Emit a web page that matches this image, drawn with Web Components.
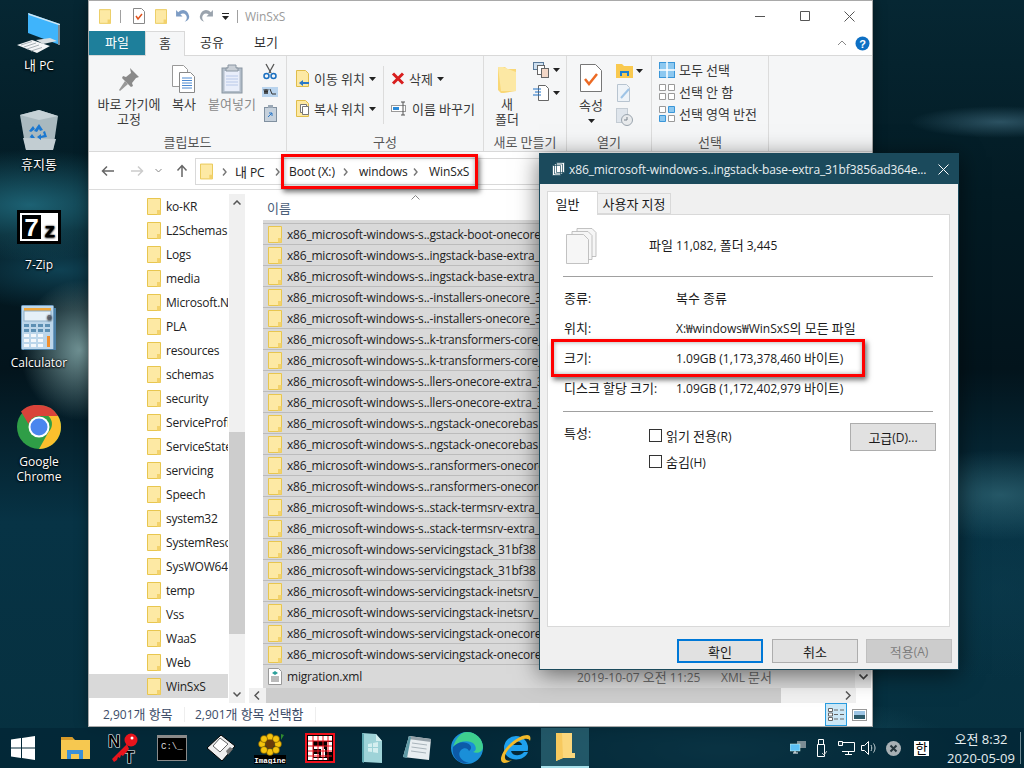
<!DOCTYPE html>
<html lang="ko">
<head>
<meta charset="utf-8">
<title>WinSxS</title>
<style>
  html, body { margin: 0; padding: 0; height: 100%; overflow: hidden; }
  body { font: 12px "Open Sans", "Noto Sans CJK KR", sans-serif; color: #1a1a1a; }
</style>
</head>
<body>
<desk-top>
  <desk-icon slot="icons" label="내 PC" icon="pc"></desk-icon>
  <desk-icon slot="icons" label="휴지통" icon="bin"></desk-icon>
  <desk-icon slot="icons" label="7-Zip" icon="zip"></desk-icon>
  <desk-icon slot="icons" label="Calculator" icon="calc"></desk-icon>
  <desk-icon slot="icons" label="Google Chrome" icon="chrome"></desk-icon>
  <file-explorer slot="windows"></file-explorer>
  <props-dialog slot="windows"></props-dialog>
  <red-mark slot="windows" style="left:281px;top:154px;width:191px;height:29px"></red-mark>
  <red-mark slot="windows" style="left:551px;top:339px;width:308px;height:32px"></red-mark>
  <task-bar slot="bar"></task-bar>
</desk-top>

<script>
// Noto's hangul is narrower than the one in the screenshot, 13px gives the same advance
const kr = (html) => html.replace(/[가-힣]+/g, (m) => `<span style="font-size:13px">${m}</span>`);

// icons shared by the components
const folder = (w = 14, h = 17) => `<svg width="${w}" height="${h}" viewBox="0 0 14 17"><path d="M.5.5h13v16H.5z" fill="#fde9a4" stroke="#e8c64f"/><path d="M10 12h3.500v4.500H10z" fill="#f3d26c"/></svg>`;
const chev = `<svg width="5" height="8" viewBox="0 0 5 8"><path d="M1 .5L4 4 1 7.500" fill="none" stroke="#777" stroke-width="1.400"/></svg>`;

const ICONS = {
  pc: `<svg width="46" height="42" viewBox="0 0 46 42"><path d="M12 1l32 11v21L12 21z" fill="#3fb4fb"/><path d="M12 1l32 11v21l-1.500-.5V13L13 3z" fill="#cfe6f2"/><path d="M43 13v20" stroke="#7d8a92" stroke-width="2"/><path d="M20 28l14-2 7 3-14 3z" fill="#d7dde0"/><path d="M1 33l15-5 18 6-13 7z" fill="#f4f6f7"/><path d="M5 33l11-3.500M8 35l12-4M11 37l12-4M15 39l11-3.500" stroke="#a9b2b8"/></svg>`,
  bin: `<svg width="40" height="42" viewBox="0 0 40 42"><path d="M1 6L20 1l19 6-5 34H7z" fill="#a9b9bf"/><path d="M1 6L20 1l19 6-19 4z" fill="#c5d1d6"/><path d="M4 29l33 1-3 11H7z" fill="#c2cdd2"/><path d="M20 15l4 6-3 1-1-2-2 3-3-1zM26 22l2 6-6 1v2l-4-3 4-3v2l3-1-1-3zM13 25l3 4h-4l-1-1-1 1zM14 17l2 3-4 3-2-1z" fill="#1c78d0"/></svg>`,
  zip: `<svg width="44" height="34" viewBox="0 0 44 34"><rect width="44" height="34" fill="#000"/><rect x="3" y="3" width="38" height="28" fill="#fff"/><rect x="5" y="5" width="19" height="24" fill="#000"/><text x="14.500" y="26" font-family="Liberation Mono" font-weight="700" font-size="26" fill="#fff" text-anchor="middle">7</text><text x="33" y="27" font-family="Liberation Mono" font-weight="700" font-size="20" fill="#000" text-anchor="middle">z</text></svg>`,
  calc: `<svg width="36" height="46" viewBox="0 0 36 46"><rect x=".5" y=".5" width="32" height="44" rx="1" fill="#bcd6ea" stroke="#6f9cc0"/><rect x="3" y="3" width="27" height="3" fill="#f0a63a"/><rect x="3" y="6" width="27" height="10" fill="#e6f0f8" stroke="#8fb0c8"/><text x="26" y="15" font-family="Liberation Mono" font-size="8" fill="#556">0</text><g fill="#5c8fb3"><path d="M3 19h5v3H3zM10 19h5v3h-5zM17 19h5v3h-5zM24 19h5v3h-5zM3 24h5v3H3zM10 24h5v3h-5zM17 24h5v3h-5zM24 24h5v3h-5z"/></g><g fill="#f4f8fb"><path d="M3 29h5v3H3zM10 29h5v3h-5zM17 29h5v3h-5zM3 34h5v3H3zM10 34h5v3h-5zM17 34h5v3h-5zM3 39h5v3H3zM10 39h5v3h-5zM17 39h5v3h-5z"/></g><rect x="26" y="31" width="3" height="11" fill="#f08f2e"/><path d="M33 3h2v42H3v-1h30z" fill="#4b7fa6"/></svg>`,
  chrome: `<svg width="44" height="44" viewBox="0 0 44 44"><circle cx="22" cy="22" r="22" fill="#2f9e47"/><path d="M22 0a22 22 0 0 1 19 11H22a11 11 0 0 0-10.500 8L4 6.500A22 22 0 0 1 22 0z" fill="#d9433a"/><path d="M41 11a22 22 0 0 1-19 33l9.500-17a11 11 0 0 0 0-16z" fill="#fbc02d"/><circle cx="22" cy="22" r="10.500" fill="#fff"/><circle cx="22" cy="22" r="8.500" fill="#4a86ee"/></svg>`
};

class DeskTop extends HTMLElement {
  constructor() {
    super();
    this.attachShadow({mode: "open"});
    this.shadowRoot.innerHTML = `
    <style>
      :host {
        display: flex; flex-direction: column; position: relative;
        width: 1024px; height: 768px; overflow: hidden;
        background:
          radial-gradient(ellipse 60px 70px at 80px 350px, rgba(150,190,190,.75), transparent),
          radial-gradient(ellipse 150px 55px at 30px 205px, rgba(35,115,135,.8), transparent),
          radial-gradient(ellipse 120px 40px at 60px 270px, rgba(18,75,95,.8), transparent),
          radial-gradient(ellipse 90px 16px at 1000px 122px, rgba(70,115,135,.6), transparent),
          radial-gradient(ellipse 120px 45px at 1000px 495px, rgba(50,105,120,.7), transparent),
          radial-gradient(ellipse 130px 90px at 1000px 590px, rgba(12,60,78,.5), transparent),
          radial-gradient(ellipse 240px 60px at 720px 750px, rgba(45,115,135,.55), transparent),
          linear-gradient(#062733 0, #031b24 25%, #03141c 48%, #073345 68%, #06303f 100%);
      }
      .icons { flex: 1; display: flex; flex-direction: column; width: 78px; }
    </style>
    <div class="icons"><slot name="icons"></slot></div>
    <slot name="windows"></slot>
    <slot name="bar"></slot>`;
  }
}

class DeskIcon extends HTMLElement {
  constructor() {
    super();
    this.attachShadow({mode: "open"});
    const name = this.getAttribute("icon");
    const tops = {pc: 12, bin: 10, zip: 12, calc: 8, chrome: 9};
    this.shadowRoot.innerHTML = kr(`
    <style>
      :host { display: flex; flex-direction: column; align-items: center; height: 99px; width: 78px;
        color: #fff; text-align: center; line-height: 15px; text-shadow: 0 1px 2px #000, 0 0 2px #000; }
      .i { height: 46px; margin-top: ${tops[name]}px; display: flex; align-items: flex-start; }
      .l { margin-top: ${{pc: 0, bin: 2, zip: 1, calc: 4, chrome: 3}[name]}px; width: 66px; }
    </style>
    <div class="i">${ICONS[name]}</div>
    <div class="l">${this.getAttribute("label")}</div>`);
  }
}

class RedMark extends HTMLElement {
  constructor() {
    super();
    this.attachShadow({mode: "open"});
    this.shadowRoot.innerHTML = `<style>
      :host { display: block; position: absolute; border: 3px solid #f00; box-shadow: 2px 3px 5px rgba(0,0,0,.55), inset 0 0 5px rgba(0,0,0,.35); }
    </style>`;
  }
}

class FileExplorer extends HTMLElement {
  constructor() {
    super();
    this.attachShadow({mode: "open"});
    const nav = ["ko-KR","L2Schemas","Logs","media","Microsoft.NET","PLA","resources","schemas","security","ServiceProfiles","ServiceState","servicing","Speech","system32","SystemResources","SysWOW64","temp","Vss","WaaS","Web","WinSxS"];
    const pre = "x86_microsoft-windows-s..";
    const rows = ["gstack-boot-onecore","ingstack-base-extra_","ingstack-base-extra_","-installers-onecore_3","-installers-onecore_3","k-transformers-core_","k-transformers-core_","llers-onecore-extra_3","llers-onecore-extra_3","ngstack-onecorebas","ngstack-onecorebas","ransformers-onecore","ransformers-onecore","stack-termsrv-extra_","stack-termsrv-extra_"].map(s => pre + s);
    const ser = "x86_microsoft-windows-servicingstack";
    rows.push(ser + "_31bf38", ser + "_31bf38", ser + "-inetsrv_", ser + "-inetsrv_", ser + "-onecore", ser + "-onecore");
    this.shadowRoot.innerHTML = kr(`
    <style>
      :host { display: flex; flex-direction: column; position: absolute; left: 88px; top: 0; width: 783px; height: 725px;
        background: #fff; border: 1px solid #a9a9a9; box-shadow: 0 0 12px rgba(0,0,0,.4); }
      .title { height: 30px; display: flex; align-items: center; position: relative; flex: none; padding-left: 10px; gap: 0; }
      .title svg { flex: none; }
      .title .name { color: #9a9a9a; margin-left: 7px; letter-spacing: -.1px; }
      .bar { width: 1px; height: 13px; background: #a0a0a0; }
      .wc { margin-left: auto; display: flex; }
      .wc span { width: 45px; height: 30px; display: flex; align-items: center; justify-content: center; }
      .addr { height: 37px; flex: none; display: flex; align-items: center; border-bottom: 1px solid #dcdcdc; box-sizing: content-box; color: #222; }
      .nb { display: flex; align-items: center; width: 106px; flex: none; padding-left: 12px; box-sizing: border-box; gap: 0; }
      .box { height: 27px; width: 500px; flex: none; border: 1px solid #d9d9d9; display: flex; align-items: center; padding-left: 4px; box-sizing: border-box; margin-top: 2px; }
      .box b { font-weight: 400; letter-spacing: -.1px; white-space: nowrap; }
      .box .chev { display: flex; justify-content: center; flex: none; }
      .main { flex: 1; display: flex; min-height: 0; }
      .nav { width: 140px; flex: none; overflow: hidden; padding-top: 4px; box-sizing: border-box; }
      .nav div { height: 24px; display: flex; align-items: center; padding-left: 58px; gap: 5px; white-space: nowrap; color: #222; width: 139px; box-sizing: border-box; overflow: hidden; letter-spacing: -.2px; }
      .nav div svg { flex: none; }
      .nav div.sel { background: #d9d9d9; }
      .sb { width: 16px; flex: none; background: #f0f0f0; position: relative; display: flex; flex-direction: column; margin-top: 4px; }
      .thumb { position: absolute; left: 0; right: 0; top: 238px; height: 202px; background: #cdcdcd; }
      .sb svg { position: absolute; left: 4px; }
      .pane { margin-left: 4px; flex: 1; display: flex; flex-direction: column; min-width: 0; }
      .head { height: 30px; flex: none; color: #4c607a; padding-left: 18px; display: flex; align-items: center; position: relative; padding-top: 4px; box-sizing: border-box; }
      .list { flex: 1; margin-left: 14px; margin-right: 16px; background: #d9d9d9; overflow: hidden; min-height: 0; }
      .row { height: 21px; display: flex; align-items: center; gap: 5px; padding-left: 5px; border-bottom: 1px solid #bcbcbc; box-sizing: border-box; white-space: nowrap; color: #222; letter-spacing: -.2px; }
      .row svg { flex: none; }
      .row:last-child { border: 0; height: 22px; }
      .part { height: 4px; overflow: hidden; border-bottom: 1px solid #bcbcbc; box-sizing: border-box; }
      .date { position: absolute; left: 314px; color: #6d6d6d; letter-spacing: 0; }
      .xml { position: absolute; left: 458px; color: #6d6d6d; letter-spacing: 0; }
      .hs { height: 15px; flex: none; background: #f0f0f0; margin-right: 16px; position: relative; }
      .hs i { position: absolute; left: 17px; width: 515px; top: 0; bottom: 0; background: #cdcdcd; }
      .vs { position: absolute; left: 606px; bottom: 15px; width: 16px; height: 22px; background: #e6e6e6; display: flex; align-items: center; justify-content: center; }
      .status { height: 23px; flex: none; display: flex; align-items: center; padding-left: 14px; color: #3c4c68; position: relative; }
      .status > div { height: 15px; line-height: 15px; white-space: nowrap; }
      .status .a { width: 81px; border-right: 1px solid #eee; margin-right: 10px; }
      .status .b { width: 120px; border-right: 1px solid #eee; }
      .status .views { margin-left: auto; display: flex; align-items: center; padding-right: 2px; gap: 1px; height: 23px; }
      .views span { height: 23px; width: 22px; display: flex; align-items: center; justify-content: center; box-sizing: border-box; }
      .views .on { background: #cce8f7; border: 1px solid #2a9de0; }
      .rel { position: relative; }
    </style>
    <div class="title">
      ${folder(12, 15)}
      <span class="bar" style="margin-left:9px"></span>
      <svg style="margin-left:12px" width="12" height="16" viewBox="0 0 12 16"><path d="M.5.5h8l3 3v12H.5z" fill="#fff" stroke="#888"/><path d="M3 8l2 3 4-5" fill="none" stroke="#e0521c" stroke-width="1.500"/></svg>
      <span style="margin-left:10px;display:flex">${folder(12, 15)}</span>
      <svg style="margin-left:8px" width="15" height="15" viewBox="0 0 14 14"><path d="M1 1v6h6L5 5c3-2 6 0 6 3 0 2-1 3-2 4 3-1 5-3 4-6C12 1 7-1 3 3z" fill="#7d9cc4"/></svg>
      <svg style="margin-left:9px" width="15" height="15" viewBox="0 0 14 14"><path d="M13 1v6H7l2-2C6 3 3 5 3 8c0 2 1 3 2 4C2 11 0 9 1 6c1-5 6-7 10-3z" fill="#9aa3ad"/></svg>
      <svg style="margin-left:8px" width="7" height="9" viewBox="0 0 7 9"><path d="M0 1h7v1H0zM0 4h7L3.500 8z" fill="#222"/></svg>
      <span class="bar" style="margin-left:8px"></span>
      <span class="name">WinSxS</span>
      <span class="wc">
        <span><svg width="10" height="10"><path d="M0 5.500h10" stroke="#555"/></svg></span>
        <span><svg width="10" height="10"><path d="M.5.500h9v9h-9z" fill="none" stroke="#555"/></svg></span>
        <span><svg width="11" height="11"><path d="M.5.500l10 10M10.500.500l-10 10" stroke="#555"/></svg></span>
      </span>
    </div>
    <ex-ribbon></ex-ribbon>
    <div class="addr">
      <div class="nb">
        <svg width="14" height="12" viewBox="0 0 14 12"><path d="M13 6H2M6 1.500L1.500 6 6 10.500" fill="none" stroke="#666" stroke-width="1.500"/></svg>
        <svg style="margin-left:15px" width="14" height="12" viewBox="0 0 14 12"><path d="M1 6h11M8 1.500L12.500 6 8 10.500" fill="none" stroke="#ccc" stroke-width="1.500"/></svg>
        <svg style="margin-left:11px" width="7" height="5" viewBox="0 0 7 5"><path d="M.5 1l3 3 3-3" fill="none" stroke="#888"/></svg>
        <svg style="margin-left:14px" width="12" height="14" viewBox="0 0 12 14"><path d="M6 13V2M1.500 6.500L6 1.500l4.500 5" fill="none" stroke="#666" stroke-width="1.500"/></svg>
      </div>
      <div class="box">
        ${folder(13, 17)}
        <span class="chev" style="width:22px">${chev}</span><b style="width:36px">내 PC</b>
        <span class="chev" style="width:12px">${chev}</span><b style="width:50px;margin-left:6px">Boot (X:)</b>
        <span class="chev" style="width:12px">${chev}</span><b style="width:50px;margin-left:8px">windows</b>
        <span class="chev" style="width:12px">${chev}</span><b style="margin-left:8px">WinSxS</b>
      </div>
    </div>
    <div class="main">
      <div class="nav">${nav.map(n => `<div class="${n === "WinSxS" ? "sel" : ""}">${folder(14, 17)}<span>${n}</span></div>`).join("")}</div>
      <div class="sb">
        <span class="thumb"></span>
        <svg style="top:6px" width="8" height="5" viewBox="0 0 8 5"><path d="M.5 4.500L4 1l3.500 3.500" fill="none" stroke="#555" stroke-width="1.500"/></svg>
        <svg style="top:498px" width="8" height="5" viewBox="0 0 8 5"><path d="M.5.500L4 4 7.500.500" fill="none" stroke="#555" stroke-width="1.500"/></svg>
      </div>
      <div class="pane rel">
        <div class="head"><span>이름</span>
          <svg style="position:absolute;left:162px;top:5px" width="9" height="5" viewBox="0 0 9 5"><path d="M.5 4.500l4-4 4 4" fill="none" stroke="#888"/></svg>
        </div>
        <div class="list">
          <div class="part"></div>
          ${rows.map(r => `<div class="row">${folder(14, 17)}<span>${r}</span></div>`).join("")}
          <div class="row rel">
            <svg width="14" height="17" viewBox="0 0 14 17"><path d="M.5.500h10l3 3v13H.5z" fill="#fff" stroke="#999"/><path d="M4 5l3-2 3 2-3 2z" fill="#2ba09a"/><path d="M3 9h8M3 11h8M3 13h8" stroke="#777"/></svg>
            <span>migration.xml</span>
            <span class="date">2019-10-07 오전 11:25</span><span class="xml">XML 문서</span>
          </div>
        </div>
        <div class="vs"><svg width="9" height="6" viewBox="0 0 9 6"><path d="M.5.500L4.500 4.500 8.500.500" fill="none" stroke="#444" stroke-width="1.600"/></svg></div>
        <div class="hs"><i></i>
          <svg style="position:absolute;left:5px;top:3px" width="6" height="9" viewBox="0 0 6 9"><path d="M5 .5l-4 4 4 4" fill="none" stroke="#555" stroke-width="1.500"/></svg>
          <svg style="position:absolute;left:596px;top:3px" width="6" height="9" viewBox="0 0 6 9"><path d="M1 .5l4 4-4 4" fill="none" stroke="#555" stroke-width="1.500"/></svg>
        </div>
      </div>
    </div>
    <div class="status">
      <div class="a">2,901개 항목</div><div class="b">2,901개 항목 선택함</div>
      <div class="views">
        <span class="on"><svg width="16" height="13" viewBox="0 0 16 13"><path d="M.5.500h4v3h-4zM.5 5h4v3h-4zM.5 9.500h4v3h-4z" fill="#fff" stroke="#666"/><path d="M6 2h4M12 2h4M6 6.500h4M12 6.500h4M6 11h4M12 11h4" stroke="#666"/></svg></span>
        <span><svg width="15" height="12" viewBox="0 0 15 12"><rect x=".5" y=".5" width="14" height="11" fill="#fff" stroke="#999"/><rect x="2" y="2" width="11" height="4" fill="#9cc4e4"/><rect x="2" y="6" width="11" height="4" fill="#2c5a6a"/></svg></span>
      </div>
    </div>`);
  }
}

class ExRibbon extends HTMLElement {
  constructor() {
    super();
    this.attachShadow({mode: "open"});
    const tri = `<svg class="tri" width="7" height="4" viewBox="0 0 7 4"><path d="M0 0h7L3.500 4z" fill="#222"/></svg>`;
    const moveI = (kind) => `<svg width="14" height="17" viewBox="0 0 14 17"><path d="M.5.500h9l3 3v13H.5z" fill="#fde9a4" stroke="#e0bd4a"/>${kind === "move" ? '<path d="M13 12H7V10l-4 3 4 3v-2h6z" fill="#2a78c8"/>' : '<path d="M4.500 4.500h6v8h-6z" fill="#fff" stroke="#777"/><path d="M6.500 6.500h6v8h-6z" fill="#fff" stroke="#777"/>'}</svg>`;
    this.shadowRoot.innerHTML = kr(`
    <style>
      :host { display: block; flex: none; }
      .tabs { height: 24px; display: flex; position: relative; color: #333; }
      .tabs > span { display: flex; align-items: center; justify-content: center; height: 24px; box-sizing: border-box; padding-bottom: 3px; }
      .tabs .f { width: 56px; background: #1e7f9b; color: #fff; }
      .tabs .h { width: 40px; background: #f5f6f7; border: 1px solid #d9d9d9; border-bottom: 0; height: 25px; position: relative; z-index: 1; }
      .tabs .p { width: 54px; }
      .tabs .e { position: absolute; right: 0; top: 0; display: flex; align-items: center; gap: 8px; padding-right: 2px; height: 24px; width: 46px; justify-content: flex-end; }
      .rib { height: 97px; background: #f5f6f7; border-top: 1px solid #d9d9d9; border-bottom: 1px solid #d9d9d9; box-sizing: border-box; display: flex; color: #3a3a3a; }
      .g { border-right: 1px solid #dcdcdc; box-sizing: border-box; display: flex; flex-direction: column; flex: none; }
      .c { flex: 1; display: flex; min-height: 0; }
      .lab { height: 20px; flex: none; display: flex; align-items: center; justify-content: center; color: #555; white-space: nowrap; }
      .big { display: flex; flex-direction: column; align-items: center; text-align: center; line-height: 15px; padding-top: 6px; flex: none; white-space: nowrap; }
      .big .ic { height: 34px; display: flex; align-items: center; justify-content: center; margin-bottom: 1px; }
      .col { display: flex; flex-direction: column; align-items: center; flex: none; }
      .line { display: flex; align-items: center; gap: 4px; white-space: nowrap; height: 17px; }
      .tri { flex: none; }
    </style>
    <div class="tabs">
      <span class="f">파일</span><span class="h">홈</span><span class="p">공유</span><span class="p">보기</span>
      <div class="e">
        <svg width="10" height="6" viewBox="0 0 10 6"><path d="M1 5l4-4 4 4" fill="none" stroke="#888"/></svg>
        <svg width="15" height="15" viewBox="0 0 15 15"><circle cx="7.500" cy="7.500" r="7" fill="#0e70c4"/><text x="7.500" y="12" fill="#fff" font-family="Liberation Sans" font-weight="700" font-size="11" text-anchor="middle">?</text></svg>
      </div>
    </div>
    <div class="rib">
      <div class="g" style="width:198px">
        <div class="c">
          <div class="big" style="width:80px"><div class="ic"><svg width="24" height="26" viewBox="0 0 24 26"><path d="M13 2l9 9-3 1-4 5 1 3-2 1-9-9 1-2 3 1 5-4z" fill="#8a8a8a"/><path d="M8 15l-6 9 1 1 8-7z" fill="#9a9a9a"/></svg></div><div>바로 가기에<br>고정</div></div>
          <div class="big" style="width:30px"><div class="ic"><svg width="24" height="28" viewBox="0 0 24 28"><path d="M.5.500h11l4 4v17H.5z" fill="#fff" stroke="#999"/><path d="M7.500 7.500h11l4 4v16h-15z" fill="#fff" stroke="#888"/><path d="M10 13h10M10 15.500h10M10 18h10M10 20.500h10M10 23h10" stroke="#4a88d0"/></svg></div><div>복사</div></div>
          <div class="big" style="width:56px;margin-left:5px"><div class="ic"><svg width="22" height="30" viewBox="0 0 22 30"><rect x="1" y="4" width="20" height="25" fill="#b2bdc9" stroke="#8a96a2"/><rect x="3.500" y="7" width="15" height="20" fill="#e9eefa"/><path d="M7 4V1h8v3h2v3H5V4z" fill="#c9cfd6" stroke="#8a96a2"/><path d="M5 12h12M5 15h12M5 18h12M5 21h12" stroke="#b8c8e8"/></svg></div><div style="color:#8a8a8a">붙여넣기</div></div>
          <div class="col" style="width:20px;padding-top:7px;gap:7px">
            <svg width="14" height="17" viewBox="0 0 14 17"><path d="M3 1l5 9M11 1L6 10" stroke="#555" stroke-width="1.300"/><circle cx="3.500" cy="13" r="2.500" fill="none" stroke="#1a6fc0" stroke-width="1.500"/><circle cx="10.500" cy="13" r="2.500" fill="none" stroke="#1a6fc0" stroke-width="1.500"/></svg>
            <svg width="16" height="10" viewBox="0 0 16 10"><rect width="16" height="10" fill="#b9d4ee"/><path d="M2 2l1 5 1-5 1 5 1-5M8 2l2 5M10 7h4" stroke="#333" fill="none"/></svg>
            <svg style="margin-top:1px" width="13" height="17" viewBox="0 0 13 17"><rect x=".5" y="2.500" width="12" height="14" fill="#c6d1dc" stroke="#8090a0"/><rect x="4" y="0" width="5" height="3" fill="#9aa8b6"/><path d="M4 12l4-4M5 8h3v3" stroke="#2a78c8" fill="none"/></svg>
          </div>
        </div>
        <div class="lab">클립보드</div>
      </div>
      <div class="g" style="width:197px">
        <div class="c" style="padding:14px 0 0 9px;box-sizing:border-box">
          <div class="col" style="align-items:flex-start;gap:13px;width:87px;border-right:1px solid #dcdcdc;height:54px;margin-top:-4px;padding-top:4px">
            <div class="line">${moveI("move")}<div>이동 위치</div>${tri}</div>
            <div class="line">${moveI("copy")}<div>복사 위치</div>${tri}</div>
          </div>
          <div class="col" style="align-items:flex-start;gap:13px;padding-left:7px">
            <div class="line"><svg width="14" height="17" viewBox="0 0 14 14"><path d="M2 2l10 10M12 2L2 12" stroke="#d81e1e" stroke-width="3"/></svg><div>삭제</div>${tri}</div>
            <div class="line"><svg width="17" height="17" viewBox="0 0 17 17"><rect x=".5" y="5.500" width="14" height="6" fill="#fff" stroke="#999"/><rect x="2" y="7" width="6" height="3" fill="#2a8ad8"/><path d="M12 2v13M10 2h4M10 15h4" stroke="#555"/></svg><div>이름 바꾸기</div></div>
          </div>
        </div>
        <div class="lab">구성</div>
      </div>
      <div class="g" style="width:83px">
        <div class="c" style="padding-left:6px;box-sizing:border-box">
          <div class="big" style="width:34px"><div class="ic"><svg width="19" height="28" viewBox="0 0 19 28"><path d="M0 2h7l2 2h9v22L6 28H3L0 25z" fill="#f9d776"/><path d="M0 2h5l13 5v19H3z" fill="#fce8a4"/></svg></div><div>새<br>폴더</div></div>
          <div class="col" style="padding:6px 0 0 9px;gap:6px;align-items:flex-start">
            <div class="line" style="gap:3px;height:16px"><svg width="17" height="16" viewBox="0 0 17 16"><rect x=".5" y=".5" width="10" height="7" fill="#cfe0f0" stroke="#5a7a9a"/><rect x="4.500" y="3.500" width="7" height="9" fill="#fff" stroke="#666"/><rect x="8.500" y="6.500" width="7" height="9" fill="#f4d8c8" stroke="#666"/></svg>${tri}</div>
            <div class="line" style="gap:3px;height:18px"><svg width="17" height="18" viewBox="0 0 17 18"><path d="M5.500 1.500h7l3 3v12h-10z" fill="#fff" stroke="#666"/><path d="M0 5h8M2 8h6M0 11h8" stroke="#1c6fc4"/></svg>${tri}</div>
          </div>
        </div>
        <div class="lab"><div>새로 만들기</div></div>
      </div>
      <div class="g" style="width:85px">
        <div class="c" style="padding-left:9px;box-sizing:border-box">
          <div class="big" style="width:30px;padding-top:5px"><div class="ic" style="margin-bottom:3px"><svg width="22" height="28" viewBox="0 0 22 28"><path d="M.5.500h15l6 6v21H.5z" fill="#fff" stroke="#777"/><path d="M5 15l4 5 8-10" fill="none" stroke="#ec6a24" stroke-width="2.500"/></svg></div><div>속성</div><svg style="margin-top:6px" width="7" height="4" viewBox="0 0 7 4"><path d="M0 0h7L3.500 4z" fill="#222"/></svg></div>
          <div class="col" style="padding:8px 0 0 10px;gap:6px;align-items:flex-start">
            <div class="line" style="gap:3px;height:14px"><svg width="17" height="14" viewBox="0 0 17 14"><path d="M0 0h6l2 2h9v12H0z" fill="#f9c94f"/><path d="M4 12V7h9v5h-2V9H6v3z" fill="#1c7fd0"/></svg>${tri}</div>
            <svg width="16" height="18" viewBox="0 0 16 18"><path d="M1.500.5h9l3 3v14h-12z" fill="#eef3f8" stroke="#b8c4d0"/><path d="M5 14l8-9" stroke="#9fc4e6" stroke-width="2"/></svg>
            <svg width="17" height="18" viewBox="0 0 17 18"><rect x=".5" y=".5" width="11" height="14" fill="#dfe5ec" stroke="#c4ccd4"/><circle cx="11" cy="12" r="5.500" fill="#e8eaec" stroke="#9aa4ae"/><path d="M11 9v3h-3" stroke="#78828c" fill="none"/></svg>
          </div>
        </div>
        <div class="lab">열기</div>
      </div>
      <div class="g" style="width:117px">
        <div class="c" style="padding:5px 0 0 7px;box-sizing:border-box">
          <div class="col" style="align-items:flex-start;gap:5px">
            <div class="line"><svg width="16" height="16" viewBox="0 0 16 16"><rect x=".5" y=".5" width="15" height="15" fill="#8cc8f0" stroke="#3a96d8"/><path d="M8 0v16M0 8h16" stroke="#fff" stroke-width="1.500"/></svg><div>모두 선택</div></div>
            <div class="line"><svg width="16" height="16" viewBox="0 0 16 16"><path d="M.5.500h6v6h-6zM9.500.500h6v6h-6zM.5 9.500h6v6h-6zM9.500 9.500h6v6h-6z" fill="#fff" stroke="#999"/></svg><div>선택 안 함</div></div>
            <div class="line"><svg width="16" height="16" viewBox="0 0 16 16"><path d="M.5.500h6v6h-6zM9.500 9.500h6v6h-6z" fill="#fff" stroke="#999"/><path d="M9.500.500h6v6h-6zM.5 9.500h6v6h-6z" fill="#8cc8f0" stroke="#3a96d8"/></svg><div>선택 영역 반전</div></div>
          </div>
        </div>
        <div class="lab">선택</div>
      </div>
    </div>`);
  }
}

class PropsDialog extends HTMLElement {
  constructor() {
    super();
    this.attachShadow({mode: "open"});
    const field = (k, v) => `<div class="f"><span>${k}</span><span>${v}</span></div>`;
    this.shadowRoot.innerHTML = kr(`
    <style>
      :host { display: flex; flex-direction: column; position: absolute; left: 539px; top: 153px; width: 418px; height: 515px;
        background: #f0f0f0; border: 1px solid #1b4a5c; box-shadow: 0 4px 22px rgba(0,0,0,.55); color: #1a1a1a; }
      .t { height: 30px; flex: none; background: #1b4a5c; color: #e8eef0; display: flex; align-items: center; padding-left: 12px; gap: 4px; white-space: nowrap; letter-spacing: -.12px; }
      .t .x { margin-left: auto; margin-right: 9px; display: flex; }
      .tabs { height: 30px; flex: none; display: flex; align-items: flex-end; padding-left: 7px; box-sizing: border-box; position: relative; z-index: 1; }
      .tabs > div { display: flex; align-items: center; justify-content: center; box-sizing: border-box; border: 1px solid #d9d9d9; white-space: nowrap; }
      .tabs .on { width: 51px; height: 24px; background: #fff; border-bottom: 0; margin-bottom: -1px; padding-right: 10px; }
      .tabs .off { width: 73px; height: 21px; border-left: 0; }
      .pane { height: 413px; flex: none; margin: 0 8px 0 7px; background: #fff; border: 1px solid #d9d9d9; box-sizing: border-box; padding: 0 16px 0 15px; }
      .head { height: 62px; display: flex; align-items: center; border-bottom: 1px solid #a0a0a0; box-sizing: border-box; }
      .head svg { margin-left: 3px; }
      .head > span { margin-left: 52px; margin-top: -3px; }
      .fs { padding-top: 5px; height: 135px; border-bottom: 1px solid #a0a0a0; box-sizing: border-box; }
      .f { height: 30px; display: grid; grid-template-columns: 112px 1fr; align-items: center; white-space: nowrap; padding-left: 1px; }
      .attr { display: grid; grid-template-columns: 86px 201px 86px; padding-top: 11px; }
      .checks { display: flex; flex-direction: column; gap: 10px; padding-top: 4px; }
      .checks label { display: flex; align-items: center; gap: 4px; height: 16px; white-space: nowrap; }
      .checks i { width: 11px; height: 11px; border: 1px solid #333; background: #fff; display: block; flex: none; }
      .btn { display: flex; align-items: center; justify-content: center; background: #e1e1e1; border: 1px solid #adadad; box-sizing: border-box; width: 86px; }
      .foot { flex: 1; display: flex; padding: 12px 0 0 137px; gap: 9px; }
      .foot .btn { height: 24px; }
      .foot .def { border: 2px solid #0078d7; }
      .foot .dis { background: #ccc; border-color: #bfbfbf; color: #7c7c7c; margin-left: -1px; }
    </style>
    <div class="t">
      <svg width="13" height="14" viewBox="0 0 13 14"><path d="M4.500.5h8v10h-8zM2.500 2h8v10h-8zM.5 3.500h8v10h-8z" fill="#fff" stroke="#1b4a5c" stroke-width=".7"/></svg>
      <span>x86_microsoft-windows-s..ingstack-base-extra_31bf3856ad364e...</span>
      <span class="x"><svg width="11" height="11"><path d="M.5.500l10 10M10.500.500l-10 10" stroke="#fff"/></svg></span>
    </div>
    <div class="tabs"><div class="on">일반</div><div class="off"><div>사용자 지정</div></div></div>
    <div class="pane">
      <div class="head">
        <svg width="31" height="36" viewBox="0 0 31 36"><g fill="#f6f6f6" stroke="#b4b4b4" stroke-width=".8"><path d="M11 .5h15l4 4v24H11z"/><path d="M6 3.500h16l4 4v24H6z"/><path d="M.5 6.500h17l5 5v24H.5z"/></g></svg>
        <span>파일 11,082, 폴더 3,445</span>
      </div>
      <div class="fs">
        ${field("종류:", "복수 종류")}
        ${field("위치:", "X:₩windows₩WinSxS의 모든 파일")}
        ${field("크기:", "1.09GB (1,173,378,460 바이트)")}
        ${field("디스크 할당 크기:", "1.09GB (1,172,402,979 바이트)")}
      </div>
      <div class="attr">
        <span style="padding-left:1px">특성:</span>
        <div class="checks">
          <label><i></i><b style="font-weight:400">읽기 전용(R)</b></label>
          <label><i></i><b style="font-weight:400">숨김(H)</b></label>
        </div>
        <span class="btn" style="height:28px">고급(D)...</span>
      </div>
    </div>
    <div class="foot">
      <span class="btn def">확인</span><span class="btn">취소</span><span class="btn dis">적용(A)</span>
    </div>`);
  }
}

class TaskBar extends HTMLElement {
  constructor() {
    super();
    this.attachShadow({mode: "open"});
    const items = [
      [1, `<svg width="24" height="24" viewBox="0 0 24 24"><path d="M0 3.500l10-1.400v9.400H0zM11 2l13-2v11.500H11zM0 12.500h10v9.400l-10-1.400zM11 12.500h13V24l-13-2z" fill="#fff"/></svg>`],
      [8, `<svg width="29" height="24" viewBox="0 0 29 24"><path d="M0 1h11l3 3h15v19H0z" fill="#f6c850"/><path d="M0 1h11l2 3H0z" fill="#d89a28"/><path d="M6 23v-9h16v9h-4v-5h-8v5z" fill="#3a8fd8"/></svg>`],
      [4, `<svg width="32" height="32" viewBox="0 0 32 32"><text x="1" y="15" font-family="Liberation Sans" font-weight="700" font-size="17" fill="#000" stroke="#fff" stroke-width="1.200" paint-order="stroke">N</text><text x="17" y="31" font-family="Liberation Sans" font-weight="700" font-size="17" fill="#000" stroke="#fff" stroke-width="1.200" paint-order="stroke">T</text><circle cx="24" cy="8" r="6.500" fill="#e8141c"/><path d="M20 12L5 27l2 3 3-2 1-3 2 1 1-3 2 1 6-7z" fill="#e8141c"/><circle cx="25" cy="6" r="1.500" fill="#fff"/></svg>`],
      [5, `<svg width="30" height="26" viewBox="0 0 30 26"><rect width="30" height="26" fill="#8a8a8a"/><rect x="1" y="3" width="28" height="22" fill="#000"/><text x="4" y="14" font-family="Liberation Mono" font-size="9" fill="#ddd">C:\\_</text></svg>`],
      [5, `<svg width="28" height="26" viewBox="0 0 28 26"><path d="M14 0l14 11-13 15L0 13z" fill="#eee" stroke="#000"/><path d="M13 3l8 6-8 8-7-6z" fill="#fff" stroke="#666"/><path d="M19 16l4-4 3 2-5 6z" fill="#777"/></svg>`],
      [5, `<svg width="32" height="32" viewBox="0 0 32 32"><rect x="0" y="23" width="32" height="9" fill="#000"/><g fill="#f4c20d" stroke="#6a4a00" stroke-width=".6"><circle cx="16" cy="5" r="3.500"/><circle cx="16" cy="20" r="3.500"/><circle cx="8" cy="12" r="3.500"/><circle cx="24" cy="12" r="3.500"/><circle cx="10" cy="7" r="3.500"/><circle cx="22" cy="7" r="3.500"/><circle cx="10" cy="18" r="3.500"/><circle cx="22" cy="18" r="3.500"/></g><circle cx="16" cy="12" r="4.500" fill="#6a3a08"/><path d="M27 2l3 1-3 5z" fill="#2f8a2f"/><text x="16" y="30.500" font-family="Liberation Mono" font-size="7.500" font-weight="700" fill="#fff" text-anchor="middle">Imagine</text></svg>`],
      [6, `<svg width="30" height="30" viewBox="0 0 30 30"><rect x="1" y="1" width="28" height="28" fill="#000" stroke="#f0101c" stroke-width="2"/><g fill="#fff"><path d="M3 3h24v5H3zM3 8h5v19H3zM22 9h5v10h-5zM9 13h10v3H9zM16 16h4v8h-4zM9 21h5v3H9zM8 25h14v2H8z"/></g><path d="M3 8h24M3 13h24M3 18h24M3 23h24M8 3v24M13 3v24M18 3v24M23 3v24" stroke="#f0101c"/></svg>`],
      [8, `<svg width="22" height="32" viewBox="0 0 22 32"><path d="M1 1l14 1 6 7v22l-18-1z" fill="#9ed3d8"/><path d="M15 2l6 7h-6z" fill="#d4eff0"/><path d="M1 1v29l2 1V2z" fill="#5fa8b0"/><path d="M7 12l4-.7v3.700H7zM12 11l5-1v5h-5zM7 16h4v4l-4-.6zM12 16h5v5l-5-.7z" fill="#d4eff0"/></svg>`],
      [2, `<svg width="30" height="30" viewBox="0 0 30 30"><path d="M6 3l22 3-2 21-26-3z" fill="#e8edf0"/><path d="M6 3l22 3v3L5 6z" fill="#95a0a8"/><path d="M0 24L6 3l2 1-4 21z" fill="#5f9aa6"/><path d="M9 10l15 2M8.500 14l15 2M8 18l15 2" stroke="#a9b4bb"/></svg>`],
      [5, `<svg width="32" height="32" viewBox="0 0 32 32"><circle cx="16" cy="16" r="16" fill="#1a8fd8"/><path d="M16 0a16 16 0 0 1 16 15c0 5-6 7-10 5 3-1 4-4 1-8-4-4-14-4-21 3C5 6 10 0 16 0z" fill="#3ecf8e"/><path d="M2 15c5-6 13-6 17-2 2 2 1 5-1 6-1-3-5-4-8-1-4 4-1 11 8 13C9 33 0 26 2 15z" fill="#0c5aa8"/></svg>`],
      [5, `<svg width="32" height="32" viewBox="0 0 32 32"><path d="M16 4a12 12 0 0 1 12 12c0 1 0 2-.4 3H11c1 5 9 6 13 1h4c-4 11-24 10-24-4A12 12 0 0 1 16 4zm-5 9h11c-1-5-10-5-11 0z" fill="#1ea0ee"/><path d="M2 30C-2 26 6 12 20 5c7-3 12-3 10 4-1-3-5-3-10-.5C9 14 2 24 6 28c2 1 4 1 6 0-4 3-8 4-10 2z" fill="#f2b92a"/></svg>`]
    ];
    this.shadowRoot.innerHTML = kr(`
    <style>
      :host { display: flex; align-items: stretch; height: 40px; flex: none; position: relative; color: #e6eef0;
        background: rgba(3,38,52,.72); }
      .s { display: flex; align-items: center; justify-content: center; flex: none; height: 40px; width: 44px; }
      .act { width: 48px; background: rgba(90,170,185,.35); border-bottom: 2px solid #a8e0ea; box-sizing: border-box; margin-left: 3px; }
      .tray { margin-left: auto; display: flex; align-items: center; padding-right: 3px; }
      .tray > svg { flex: none; }
      .han { width: 15px; height: 15px; background: #fff; color: #000; display: flex; align-items: center; justify-content: center; margin-left: 13px; line-height: 1; overflow: hidden; }
      .clock { text-align: center; line-height: 19px; width: 76px; padding-top: 1px; margin-left: 14px; font-size: 13px; white-space: nowrap; }
      .end { width: 1px; height: 32px; background: #6f8a94; margin-left: 1px; }
    </style>
    ${items.map(([m, s]) => `<div class="s" style="margin-left:${m}px">${s}</div>`).join("")}
    <div class="s act"><svg width="19" height="28" viewBox="0 0 19 28"><path d="M0 0h16v20h3v5H7L0 28z" fill="#fbd77c"/><path d="M0 0h6l1 25-7 3z" fill="#f7c95e"/></svg></div>
    <div class="tray">
      <svg width="16" height="14" viewBox="0 0 16 14"><rect x="7" y="0" width="9" height="7" fill="#7c8c94"/><rect x="0" y="3" width="10" height="7" fill="#5cc0f5" stroke="#dfe" stroke-width=".5"/><path d="M3 12h5M5 10v2" stroke="#fff"/></svg>
      <svg style="margin-left:10px" width="11" height="18" viewBox="0 0 11 18"><path d="M1.500 5.500h7v12h-7z" fill="none" stroke="#fff"/><path d="M2.500.5h5v5h-5z" fill="none" stroke="#fff"/><path d="M6 14l2 2 3-4" stroke="#ccc" fill="none"/></svg>
      <svg style="margin-left:11px" width="17" height="14" viewBox="0 0 17 14"><path d="M4 1.500h12.500v9H4" fill="none" stroke="#fff"/><path d="M.5.500h4v4h-4z" fill="#1d3c48" stroke="#fff"/><path d="M7 13.500h7M10.500 10.500v3" stroke="#fff"/></svg>
      <svg style="margin-left:6px" width="16" height="14" viewBox="0 0 16 14"><path d="M.5 4.500h3l4-4v13l-4-4h-3z" fill="none" stroke="#fff"/><path d="M10 4c1 2 1 4 0 6M12.500 2.500c2 3 2 6 0 9" fill="none" stroke="#c8d4d8"/></svg>
      <svg style="margin-left:9px" width="15" height="15" viewBox="0 0 15 15"><circle cx="7.500" cy="7.500" r="7.500" fill="#a8b0b4"/><path d="M4.500 4.500l6 6M10.500 4.500l-6 6" stroke="#26353c" stroke-width="2"/></svg>
      <span class="han">한</span>
      <div class="clock">오전 8:32<br>2020-05-09</div>
      <span class="end"></span>
    </div>`);
  }
}

window.customElements.define("desk-top", DeskTop);
window.customElements.define("desk-icon", DeskIcon);
window.customElements.define("red-mark", RedMark);
window.customElements.define("ex-ribbon", ExRibbon);
window.customElements.define("file-explorer", FileExplorer);
window.customElements.define("props-dialog", PropsDialog);
window.customElements.define("task-bar", TaskBar);
</script>
</body>
</html>
